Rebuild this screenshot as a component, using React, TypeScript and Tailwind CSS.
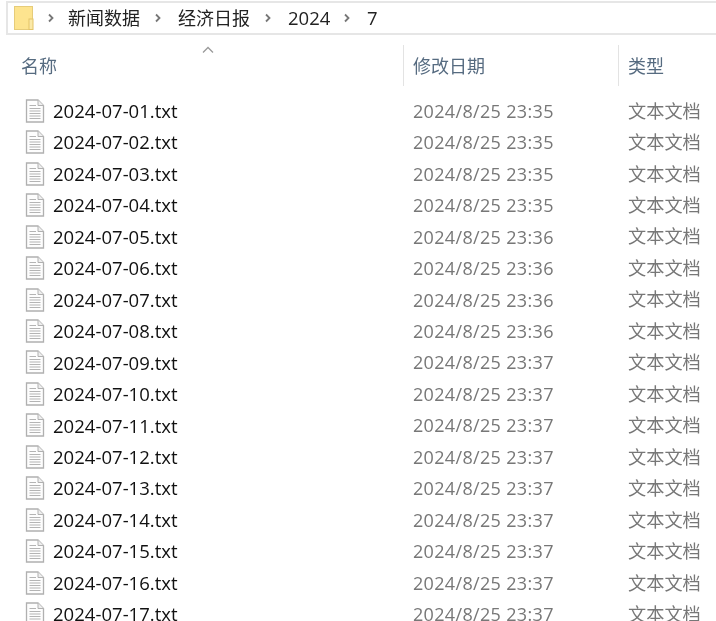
const FONT = "font-['Open_Sans','Noto_Sans_CJK_SC',sans-serif]";

const rows: [string, string][] = [
  ["2024-07-01.txt", "23:35"],
  ["2024-07-02.txt", "23:35"],
  ["2024-07-03.txt", "23:35"],
  ["2024-07-04.txt", "23:35"],
  ["2024-07-05.txt", "23:36"],
  ["2024-07-06.txt", "23:36"],
  ["2024-07-07.txt", "23:36"],
  ["2024-07-08.txt", "23:36"],
  ["2024-07-09.txt", "23:37"],
  ["2024-07-10.txt", "23:37"],
  ["2024-07-11.txt", "23:37"],
  ["2024-07-12.txt", "23:37"],
  ["2024-07-13.txt", "23:37"],
  ["2024-07-14.txt", "23:37"],
  ["2024-07-15.txt", "23:37"],
  ["2024-07-16.txt", "23:37"],
  ["2024-07-17.txt", "23:37"],
];

function Chevron() {
  return (
    <svg width="8" height="10" viewBox="0 0 8 10" className="shrink-0">
      <path d="M2 1.5 L5.5 5 L2 8.5" fill="none" stroke="#777" strokeWidth="1.8" />
    </svg>
  );
}

function FolderIcon() {
  return (
    <svg width="20" height="24" viewBox="0 0 20 24" className="shrink-0">
      <rect x="0.5" y="0.5" width="18" height="23" fill="#fde48f" stroke="#e6cc7a" />
      <rect x="15" y="13" width="4" height="10.5" fill="#fbe9a8" stroke="#e3c468" />
    </svg>
  );
}

function FileIcon() {
  return (
    <svg width="20" height="24" viewBox="0 0 20 24" className="shrink-0">
      <path d="M1.5 1 H13 L18.5 6.5 V23 H1.5 Z" fill="#fdfdfd" stroke="#b0b0b0" strokeWidth="1.3" />
      <path d="M13 1 V6.5 H18.5" fill="#eee" stroke="#b0b0b0" strokeWidth="1" />
      <path d="M4.5 6.5 H11 M4.5 9.5 H15.5 M4.5 12 H15.5 M4.5 14.5 H15.5 M4.5 17 H15.5 M4.5 19.5 H15.5" stroke="#b4b4b4" strokeWidth="1.1" fill="none" />
    </svg>
  );
}

export default function App() {
  return (
    <div className={`${FONT} w-[716px] h-[621px] overflow-hidden bg-white blur-[0.3px]`}>
      <div className="ml-[6px] mt-px h-[34px] flex items-center border-y-2 border-l-2 border-[#e6e6e6] pl-[6px] text-[18px] text-[#222]">
        <FolderIcon />
        <div className="ml-[13px]"><Chevron /></div>
        <span className="ml-[13px] w-[72px] whitespace-nowrap">新闻数据</span>
        <div className="ml-[14px]"><Chevron /></div>
        <span className="ml-[16px] w-[72px] whitespace-nowrap">经济日报</span>
        <div className="ml-[14px]"><Chevron /></div>
        <span className="ml-[16px] w-[42px] text-[18.5px]">2024</span>
        <div className="ml-[13px]"><Chevron /></div>
        <span className="ml-[16px] text-[18.5px]">7</span>
      </div>

      <div className="relative h-[51px] flex text-[#566b80] text-[18px]">
        <svg width="14" height="8" viewBox="0 0 14 8" className="absolute left-[201px] top-[11px]">
          <path d="M2 6.5 L7 1.5 L12 6.5" fill="none" stroke="#9a9a9a" strokeWidth="1.3" />
        </svg>
        <div className="w-[403px] pl-[21px] pt-[18px]">名称</div>
        <div className="w-[215px] mt-[10px] h-[41px] border-l border-[#e3e3e3] pl-[9px] pt-[8px]">修改日期</div>
        <div className="flex-1 mt-[10px] h-[41px] border-l border-[#e3e3e3] pl-[9px] pt-[8px]">类型</div>
      </div>

      <div className="pt-[9px] flex flex-col">
        {rows.map(([name, time]) => (
          <div key={name} className="h-[31.47px] shrink-0 flex items-center">
            <div className="w-[403px] flex items-center pl-[25px]">
              <FileIcon />
              <span className="ml-[8px] text-[18.5px] tracking-[0.03px] text-[#111] whitespace-nowrap">{name}</span>
            </div>
            <div className="w-[215px] pl-[10px] pt-px text-[18px] tracking-[0.33px] text-[#777] whitespace-nowrap">2024/8/25 {time}</div>
            <div className="pl-[10px] pt-px text-[18.2px] text-[#777] whitespace-nowrap">文本文档</div>
          </div>
        ))}
      </div>
    </div>
  );
}
